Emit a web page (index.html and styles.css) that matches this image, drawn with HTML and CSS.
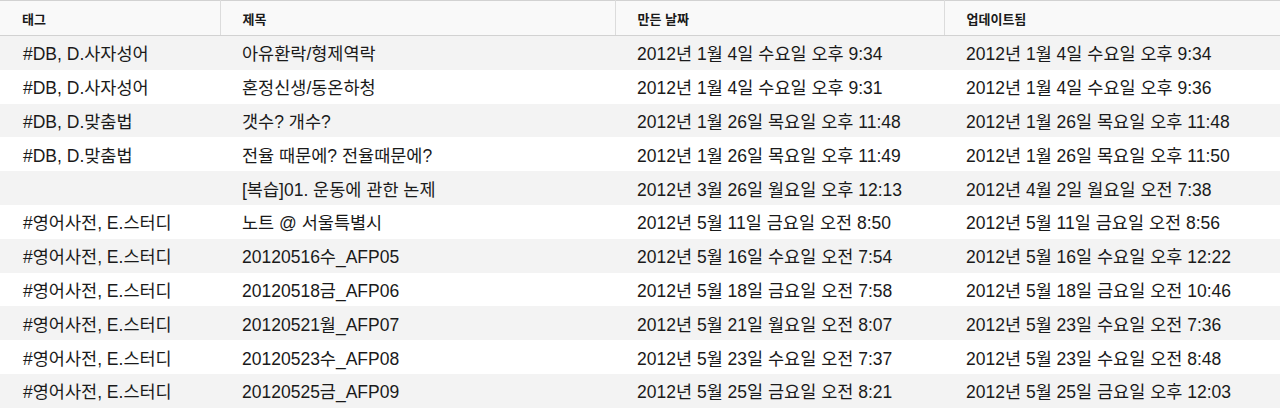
FILE: index.html
```html
<!DOCTYPE html>
<html lang="ko">
<head>
<meta charset="utf-8">
<link rel="stylesheet" href="styles.css">
</head>
<body>
<table class="notes">
  <colgroup>
    <col class="c-tag"><col class="c-title"><col class="c-created"><col class="c-updated">
  </colgroup>
  <thead>
    <tr><th>태그</th><th>제목</th><th>만든 날짜</th><th>업데이트됨</th></tr>
  </thead>
  <tbody>
    <tr><td>#DB, D.사자성어</td><td>아유환락/형제역락</td><td>2012년 1월 4일 수요일 오후 9:34</td><td>2012년 1월 4일 수요일 오후 9:34</td></tr>
    <tr><td>#DB, D.사자성어</td><td>혼정신생/동온하청</td><td>2012년 1월 4일 수요일 오후 9:31</td><td>2012년 1월 4일 수요일 오후 9:36</td></tr>
    <tr><td>#DB, D.맞춤법</td><td>갯수? 개수?</td><td>2012년 1월 26일 목요일 오후 11:48</td><td>2012년 1월 26일 목요일 오후 11:48</td></tr>
    <tr><td>#DB, D.맞춤법</td><td>전율 때문에? 전율때문에?</td><td>2012년 1월 26일 목요일 오후 11:49</td><td>2012년 1월 26일 목요일 오후 11:50</td></tr>
    <tr><td></td><td>[복습]01. 운동에 관한 논제</td><td>2012년 3월 26일 월요일 오후 12:13</td><td>2012년 4월 2일 월요일 오전 7:38</td></tr>
    <tr><td>#영어사전, E.스터디</td><td>노트 @ 서울특별시</td><td>2012년 5월 11일 금요일 오전 8:50</td><td>2012년 5월 11일 금요일 오전 8:56</td></tr>
    <tr><td>#영어사전, E.스터디</td><td>20120516수_AFP05</td><td>2012년 5월 16일 수요일 오전 7:54</td><td>2012년 5월 16일 수요일 오후 12:22</td></tr>
    <tr><td>#영어사전, E.스터디</td><td>20120518금_AFP06</td><td>2012년 5월 18일 금요일 오전 7:58</td><td>2012년 5월 18일 금요일 오전 10:46</td></tr>
    <tr><td>#영어사전, E.스터디</td><td>20120521월_AFP07</td><td>2012년 5월 21일 월요일 오전 8:07</td><td>2012년 5월 23일 수요일 오전 7:36</td></tr>
    <tr><td>#영어사전, E.스터디</td><td>20120523수_AFP08</td><td>2012년 5월 23일 수요일 오전 7:37</td><td>2012년 5월 23일 수요일 오전 8:48</td></tr>
    <tr><td>#영어사전, E.스터디</td><td>20120525금_AFP09</td><td>2012년 5월 25일 금요일 오전 8:21</td><td>2012년 5월 25일 금요일 오후 12:03</td></tr>
  </tbody>
</table>
</body>
</html>
```
FILE: styles.css
```css
html, body {
  margin: 0;
  padding: 0;
  background: #ffffff;
}
body {
  font-family: "Liberation Sans", "Noto Sans CJK KR", sans-serif;
  color: #1a1a1a;
  overflow: hidden;
}
.notes {
  width: 1280px;
  border-collapse: collapse;
  table-layout: fixed;
}
.c-tag { width: 220px; }
.c-title { width: 395px; }
.c-created { width: 329px; }
.c-updated { width: 336px; }
.notes th {
  height: 34px;
  padding: 0 0 0 22px;
  text-align: left;
  font-size: 13px;
  font-weight: bold;
  color: #1a1a1a;
  background: #f9f9f9;
  border-top: 1px solid #d2d2d2;
  border-bottom: 1px solid #d2d2d2;
  border-right: 1px solid #dcdcdc;
}
.notes th:last-child { border-right: none; }
.notes td {
  height: 33.8px;
  padding: 0 0 0 22px;
  font-size: 17.5px;
  white-space: nowrap;
  overflow: hidden;
}
.notes td:first-child { padding-left: 23px; }
.notes tbody tr:nth-child(odd) { background: #f3f3f3; }
.notes tbody tr:nth-child(even) { background: #ffffff; }
```
